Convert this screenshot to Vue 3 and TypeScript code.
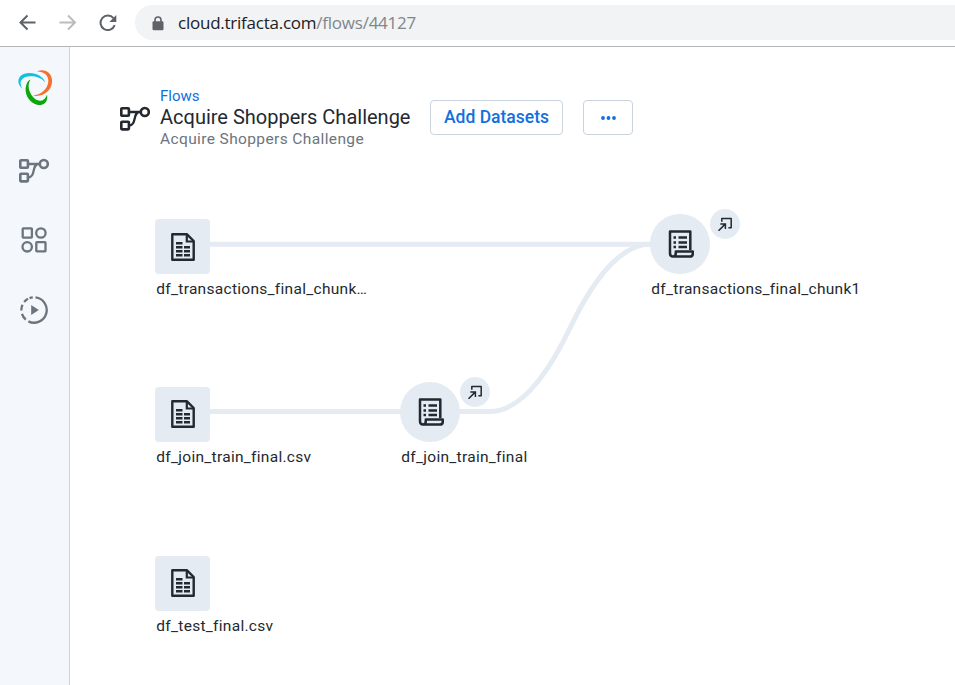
<script setup lang="ts">
interface FlowNode {
  id: number
  kind: 'dataset' | 'recipe'
  label: string
  x: number
  y: number
}

const nodes: FlowNode[] = [
  { id: 1, kind: 'dataset', label: 'df_transactions_final_chunk…', x: 155, y: 219.3 },
  { id: 2, kind: 'recipe', label: 'df_transactions_final_chunk1', x: 650, y: 214.3 },
  { id: 3, kind: 'dataset', label: 'df_join_train_final.csv', x: 155, y: 386.6 },
  { id: 4, kind: 'recipe', label: 'df_join_train_final', x: 400, y: 381.6 },
  { id: 5, kind: 'dataset', label: 'df_test_final.csv', x: 155, y: 555.6 },
]

const canvasX = 70
const canvasY = 47

const nodeStyle = (n: FlowNode) => ({
  left: `${n.x - canvasX}px`,
  top: `${n.y - canvasY}px`,
})
</script>

<template>
  <div class="window">
    <header class="browser">
      <svg class="nav" width="124" height="30" viewBox="0 0 124 30" fill="none" stroke-width="2">
        <path d="M35.500 14.500H21M27.500 7.500L20.500 14.500L27.500 21.500" stroke="#5f6368" />
        <path d="M59.500 14.500H74.500M68 7.500L75 14.500L68 21.500" stroke="#babcbe" />
        <path d="M113.500 10.200A7.300 7.300 0 1 0 114.700 17.200" stroke="#5f6368" />
        <path d="M116.300 7V14H109.300Z" fill="#5f6368" />
      </svg>
      <div class="address">
        <svg class="lock" width="12" height="15" viewBox="0 0 12 15">
          <path d="M3 6V4a3 3 0 0 1 6 0V6" fill="none" stroke="#5f6368" stroke-width="1.600" />
          <rect x="0.500" y="5.300" width="11" height="9" rx="1.300" fill="#5f6368" />
        </svg>
        <span class="url">cloud.trifacta.com<span class="path">/flows/44127</span></span>
      </div>
    </header>

    <div class="body">
      <nav class="sidebar">
        <svg class="logo" width="36" height="36" viewBox="0 0 36 36">
          <path d="M5.500 18.800C-2 13 1 3.200 12 3C20 2.800 26.500 7 28.300 12.500C24 7.200 18 5.800 12.500 6.200C4.500 6.800 1.200 12 5.500 18.800Z" fill="#13c0e0" />
          <path d="M20 1.400C28-2 35.300 3 35.100 11.500C34.800 20 27 27.500 15.800 25.600C24 24.800 30 19.500 31.200 12.500C32.200 5.500 27 1.200 20 1.400Z" fill="#f4702b" />
          <path d="M13.600 9.600C10 15 11.500 22 16.500 27.500C21.500 32.500 27.500 32 30 24.800C31.500 32 26 36.300 20 34.700C12 32.500 7.500 24 8.800 17C9.500 13 11 10.500 13.600 9.600Z" fill="#0ba80b" />
        </svg>
        <svg class="flow-nav" width="31" height="26" viewBox="0 0 31 26" fill="none" stroke="#6c757d" stroke-width="2.600">
          <rect x="2.300" y="2.200" width="7.600" height="7.600" rx="0.800" />
          <rect x="2.300" y="15.800" width="7.600" height="7.600" rx="0.800" />
          <circle cx="25.800" cy="6" r="4" />
          <path d="M10 6H22M10 19.500C18 19.500 13.500 6 20.500 6" stroke-width="2.300" />
        </svg>
        <svg class="library" width="26" height="26" viewBox="0 0 26 26" fill="none" stroke="#6c757d" stroke-width="2.300">
          <rect x="1.700" y="1.400" width="9.200" height="9.200" rx="0.600" />
          <circle cx="19.900" cy="6" r="4.700" />
          <circle cx="6.200" cy="19.800" r="4.700" />
          <rect x="15.300" y="15.200" width="9.200" height="9.200" rx="0.600" />
        </svg>
        <svg class="jobs" width="28" height="28" viewBox="0 0 28 28">
          <path d="M15.500 1.400A12.700 12.700 0 1 1 8.400 25.400M5.800 23.600A12.700 12.700 0 0 1 2 17.800M1.400 14.500A12.700 12.700 0 0 1 2.500 8.700M4.200 6A12.700 12.700 0 0 1 8 2.800M9.500 2.100A12.700 12.700 0 0 1 12.800 1.400" fill="none" stroke="#6c757d" stroke-width="2.300" />
          <path d="M11.200 9V19L18.800 14Z" fill="#6c757d" />
        </svg>
      </nav>

      <main class="content">
        <section class="heading">
          <svg class="flow-icon" width="31" height="26" viewBox="0 0 31 26" fill="none" stroke="#23292e" stroke-width="2.600">
            <rect x="2.300" y="2.200" width="7.600" height="7.600" rx="0.800" />
            <rect x="2.300" y="15.800" width="7.600" height="7.600" rx="0.800" />
            <circle cx="25.800" cy="6" r="4" />
            <path d="M10 6H22M10 19.500C18 19.500 13.500 6 20.500 6" stroke-width="2.300" />
          </svg>
          <div class="titles">
            <a class="crumb">Flows</a>
            <h1>Acquire Shoppers Challenge</h1>
            <p>Acquire Shoppers Challenge</p>
          </div>
          <button class="add">Add Datasets</button>
          <button class="more" aria-label="More">
            <svg width="15" height="4" viewBox="0 0 15 4" fill="#1070e0">
              <circle cx="2" cy="2" r="1.900" />
              <circle cx="7.500" cy="2" r="1.900" />
              <circle cx="13" cy="2" r="1.900" />
            </svg>
          </button>
        </section>

        <svg class="edges" width="885" height="638" viewBox="70 47 885 638" fill="none" stroke="#e5ebf3" stroke-width="5">
          <path d="M209 244.300H660" />
          <path d="M209 411.400H410" />
          <path d="M450 411.400H490Q530 411.400 570 328T650 244.300" />
        </svg>

        <div v-for="n in nodes" :key="n.id" class="node" :class="n.kind" :style="nodeStyle(n)">
          <div class="shape">
            <svg v-if="n.kind === 'dataset'" width="26" height="28" viewBox="0 0 26 28">
              <path d="M2.300 1.300H17L23.700 8V26.700H2.300Z" fill="none" stroke="#23292e" stroke-width="2.400" stroke-linejoin="round" />
              <path d="M16.800 1.500V8.500H23.500" fill="none" stroke="#23292e" stroke-width="2.200" />
              <path d="M6 10.300H12.500M6 14.300H12.500M14 14.300H20M6 18.300H12.500M14 18.300H20M6 22.300H12.500M14 22.300H20" stroke="#23292e" stroke-width="2.400" />
            </svg>
            <svg v-else width="27" height="28" viewBox="0 0 27 28" fill="none" stroke="#23292e" stroke-width="2.500" stroke-linejoin="round">
              <path d="M23.300 20V1.500H3V23.300Q3 26.500 6 26.500H23Q25.800 26.500 25.800 23.500V21.500H8.800V23Q8.800 26.500 6 26.500" />
              <path d="M6.500 7.500H9M6.500 12.500H9M6.500 17H9M11.500 7.500H20M11.500 12.500H20M11.500 17H20" stroke-width="2.300" />
            </svg>
          </div>
          <span v-if="n.kind === 'recipe'" class="badge">
            <svg width="14" height="14" viewBox="0 0 14 14" fill="none" stroke="#23292e" stroke-width="1.500">
              <path d="M3.800 4.700V1.500H13.200V10.700H10.400" stroke-linejoin="round" />
              <path d="M0.500 13.800L7.200 7.100M2.300 6.900H7.400V12.100" />
            </svg>
          </span>
          <span class="label">{{ n.label }}</span>
        </div>
      </main>
    </div>
  </div>
</template>

<style>
body {
  margin: 0;
  background: #fff;
  overflow: hidden;
}
</style>

<style scoped>
.window {
  width: 955px;
  height: 685px;
  display: flex;
  flex-direction: column;
  font-family: Roboto, sans-serif;
  color: #23292e;
  overflow: hidden;
}
svg {
  display: block;
  flex: none;
}
.browser {
  box-sizing: border-box;
  height: 47px;
  flex: none;
  display: flex;
  align-items: flex-start;
  border-bottom: 1px solid #b4b5b7;
}
.nav {
  margin: 8px 11px 0 0;
}
.address {
  flex: 1;
  height: 35px;
  margin-top: 5px;
  display: flex;
  align-items: center;
  background: #f1f3f4;
  border-radius: 18px 0 0 18px;
}
.lock {
  margin: 1px 14px 0 17px;
}
.url {
  font: 17px/24px "Open Sans", sans-serif;
  letter-spacing: -0.24px;
  white-space: nowrap;
  color: #202124;
}
.path {
  color: #80868b;
}
.body {
  flex: 1;
  display: flex;
  min-height: 0;
}
.sidebar {
  box-sizing: border-box;
  width: 70px;
  flex: none;
  padding-top: 23px;
  background: #f4f7fc;
  border-right: 1px solid #cad4df;
}
.logo {
  margin-left: 16.500px;
}
.flow-nav {
  margin: 52px 0 0 18px;
}
.library {
  margin: 43px 0 0 21px;
}
.jobs {
  margin: 43px 0 0 20px;
}
.content {
  position: relative;
  flex: 1;
  min-width: 0;
}
.heading {
  display: flex;
  align-items: flex-start;
  padding: 38px 0 0 49px;
}
.flow-icon {
  margin: 21px 10px 0 0;
}
.titles {
  width: 270px;
  flex: none;
  white-space: nowrap;
}
.crumb {
  display: block;
  padding-top: 1px;
  font-size: 15px;
  line-height: 20px;
  color: #1070e0;
}
h1 {
  margin: 0;
  font-size: 20px;
  font-weight: 400;
  line-height: 22px;
}
p {
  margin: 0;
  font-size: 15.500px;
  line-height: 22px;
  letter-spacing: 0.380px;
  color: #6c757d;
}
button {
  box-sizing: border-box;
  height: 35px;
  margin-top: 15px;
  padding: 0;
  display: flex;
  align-items: center;
  justify-content: center;
  background: #fff;
  border: 1px solid #cad4df;
  border-radius: 4px;
  color: #1070e0;
  font: 500 17.500px/20px Roboto, sans-serif;
}
.add {
  width: 133px;
  margin-right: 20px;
  padding-bottom: 1px;
}
.more {
  width: 50px;
}
.edges {
  position: absolute;
  left: 0;
  top: 0;
}
.node {
  position: absolute;
}
.shape {
  display: flex;
  align-items: center;
  justify-content: center;
  background: #e5ebf3;
}
.dataset .shape {
  width: 55px;
  height: 55px;
  border-radius: 4px;
}
.recipe .shape {
  width: 60px;
  height: 60px;
  border-radius: 50%;
}
.badge {
  position: absolute;
  left: 60px;
  top: -5px;
  width: 30px;
  height: 30px;
  display: flex;
  align-items: center;
  justify-content: center;
  border-radius: 50%;
  background: #e5ebf3;
}
.label {
  display: block;
  margin-left: 1.300px;
  padding-top: 4px;
  font-size: 15.500px;
  line-height: 22px;
  letter-spacing: 0.290px;
  white-space: nowrap;
}
</style>
